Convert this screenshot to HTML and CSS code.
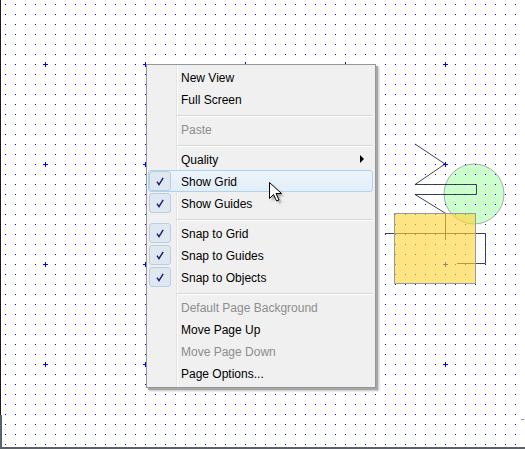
FILE: index.html
```html
<!DOCTYPE html>
<html>
<head>
<meta charset="utf-8">
<link rel="stylesheet" href="styles.css">
</head>
<body>
<div class="stage">
  <svg class="canvas" width="525" height="449" viewBox="0 0 525 449" xmlns="http://www.w3.org/2000/svg">
    <defs>
      <pattern id="dots" width="10" height="10" patternUnits="userSpaceOnUse">
        <rect x="5" y="4" width="1" height="1" fill="#0000ff"/>
      </pattern>
    </defs>
    <rect x="0" y="0" width="525" height="449" fill="#ffffff"/>
    <circle cx="474" cy="194" r="30" fill="#ccffcc" stroke="#a8a8a8" stroke-width="1"/>
    <polyline points="415,144 445,164 415,184.5 476.5,184.5 476.5,194.5 415,194.5 445,213 445.5,213 445.5,240" fill="none" stroke="#3c4450" stroke-width="1"/>
    <polyline points="385,233.5 485.5,233.5 485.5,263.5 457,263.5" fill="none" stroke="#3c4450" stroke-width="1"/>
    <rect x="0" y="0" width="525" height="449" fill="url(#dots)"/>
    <g stroke="#0000ff" stroke-width="1" shape-rendering="crispEdges" fill="none">
      <path d="M43 64.5h5M45.5 62v5M143 64.5h5M145.5 62v5M243 64.5h5M245.5 62v5M343 64.5h5M345.5 62v5M443 64.5h5M445.5 62v5"/>
      <path d="M43 164.5h5M45.5 162v5M143 164.5h5M145.5 162v5M243 164.5h5M245.5 162v5M343 164.5h5M345.5 162v5M443 164.5h5M445.5 162v5"/>
      <path d="M43 264.5h5M45.5 262v5M143 264.5h5M145.5 262v5M243 264.5h5M245.5 262v5M343 264.5h5M345.5 262v5M443 264.5h5M445.5 262v5"/>
      <path d="M43 364.5h5M45.5 362v5M143 364.5h5M145.5 362v5M243 364.5h5M245.5 362v5M343 364.5h5M345.5 362v5M443 364.5h5M445.5 362v5"/>
    </g>
    <rect x="394.5" y="213.5" width="81" height="70" fill="rgba(255,212,55,0.62)" stroke="#9a9a9a" stroke-width="1"/>
    <rect x="0" y="0" width="1" height="415" fill="#24161a"/>
    <rect x="0" y="415" width="2" height="34" fill="#5a6268"/>
    <rect x="0" y="447" width="525" height="2" fill="#5a6268"/>
    <rect x="521" y="419" width="3" height="1" fill="#8a9096"/>
  </svg>

  <div class="menu">
    <div class="item"><span class="ico"></span><span class="label">New View</span></div>
    <div class="item"><span class="ico"></span><span class="label">Full Screen</span></div>
    <div class="sep"></div>
    <div class="item disabled"><span class="ico"></span><span class="label">Paste</span></div>
    <div class="sep"></div>
    <div class="item"><span class="ico"></span><span class="label">Quality</span><span class="arrow"></span></div>
    <div class="item hover"><span class="ico check"><svg width="8" height="9" viewBox="0 0 8 9"><path d="M1 4.6 L3 7.6 L7.2 0.8" fill="none" stroke="#1a2472" stroke-width="1.5"/></svg></span><span class="label">Show Grid</span></div>
    <div class="item"><span class="ico check"><svg width="8" height="9" viewBox="0 0 8 9"><path d="M1 4.6 L3 7.6 L7.2 0.8" fill="none" stroke="#1a2472" stroke-width="1.5"/></svg></span><span class="label">Show Guides</span></div>
    <div class="sep"></div>
    <div class="item"><span class="ico check"><svg width="8" height="9" viewBox="0 0 8 9"><path d="M1 4.6 L3 7.6 L7.2 0.8" fill="none" stroke="#1a2472" stroke-width="1.5"/></svg></span><span class="label">Snap to Grid</span></div>
    <div class="item"><span class="ico check"><svg width="8" height="9" viewBox="0 0 8 9"><path d="M1 4.6 L3 7.6 L7.2 0.8" fill="none" stroke="#1a2472" stroke-width="1.5"/></svg></span><span class="label">Snap to Guides</span></div>
    <div class="item"><span class="ico check"><svg width="8" height="9" viewBox="0 0 8 9"><path d="M1 4.6 L3 7.6 L7.2 0.8" fill="none" stroke="#1a2472" stroke-width="1.5"/></svg></span><span class="label">Snap to Objects</span></div>
    <div class="sep"></div>
    <div class="item disabled"><span class="ico"></span><span class="label">Default Page Background</span></div>
    <div class="item"><span class="ico"></span><span class="label">Move Page Up</span></div>
    <div class="item disabled"><span class="ico"></span><span class="label">Move Page Down</span></div>
    <div class="item"><span class="ico"></span><span class="label">Page Options...</span></div>
  </div>

  <svg class="cursor" width="18" height="26" viewBox="0 0 18 26" xmlns="http://www.w3.org/2000/svg">
    <defs>
      <filter id="blur" x="-30%" y="-30%" width="160%" height="160%">
        <feGaussianBlur stdDeviation="0.8"/>
      </filter>
    </defs>
    <path d="M3 3 L3 19 L7 15 L10 21.5 L12.5 20.5 L9.5 14 L15 14 Z" fill="rgba(0,0,0,0.35)" filter="url(#blur)"/>
    <path d="M0.5 0.5 L0.5 16.5 L4.5 12.5 L7.5 19 L10 18 L7 11.5 L12.5 11.5 Z" fill="#ffffff" stroke="#000000" stroke-width="1" stroke-linejoin="miter"/>
  </svg>
</div>
</body>
</html>
```

FILE: styles.css
```css
html, body {
  margin: 0;
  padding: 0;
  background: #ffffff;
}

.stage {
  position: relative;
  width: 525px;
  height: 449px;
  overflow: hidden;
  font-family: "Liberation Sans", Arial, sans-serif;
  font-size: 12px;
}

.canvas {
  display: block;
}

.menu {
  position: absolute;
  left: 146px;
  top: 64px;
  width: 230px;
  box-sizing: border-box;
  border: 1px solid #979797;
  padding: 1px 0 3px 0;
  background: linear-gradient(to right, transparent 29px, #e2e3e3 29px, #e2e3e3 30px, #ffffff 30px, #ffffff 31px, transparent 31px), #f0f0f0;
  box-shadow: 2px 2px 0 #a6a6a6, 3px 3px 2px rgba(0, 0, 0, 0.25);
}

.item {
  display: flex;
  align-items: center;
  height: 22px;
  box-sizing: border-box;
  margin: 0 2px 0 1px;
  border: 1px solid transparent;
  border-radius: 3px;
  color: #000000;
  white-space: nowrap;
}

.item.hover {
  background: linear-gradient(to bottom, #eef4fa, #e3eef8);
  border-color: #a9d6ec;
}

.item.disabled {
  color: #8d8d8d;
}

.ico {
  flex: 0 0 auto;
  width: 22px;
  height: 20px;
  box-sizing: border-box;
  display: flex;
  align-items: center;
  justify-content: center;
}

.ico.check {
  border: 1px solid #b9cee0;
  border-radius: 3px;
  background: #dfe8f1;
}

.ico.check svg {
  display: block;
}

.label {
  margin-left: 10px;
  line-height: 17px;
  padding-top: 3px;
  align-self: flex-start;
}

.arrow {
  margin-left: auto;
  margin-right: 8px;
  width: 0;
  height: 0;
  border-left: 4px solid #000000;
  border-top: 4px solid transparent;
  border-bottom: 4px solid transparent;
}

.sep {
  height: 8px;
  box-sizing: border-box;
  padding-top: 5px;
  margin: 0 2px 0 30px;
}

.sep::before {
  content: "";
  display: block;
  height: 0;
  border-top: 1px solid #d7d7d7;
  border-bottom: 1px solid #ffffff;
}

.cursor {
  position: absolute;
  left: 269px;
  top: 182px;
}
```
